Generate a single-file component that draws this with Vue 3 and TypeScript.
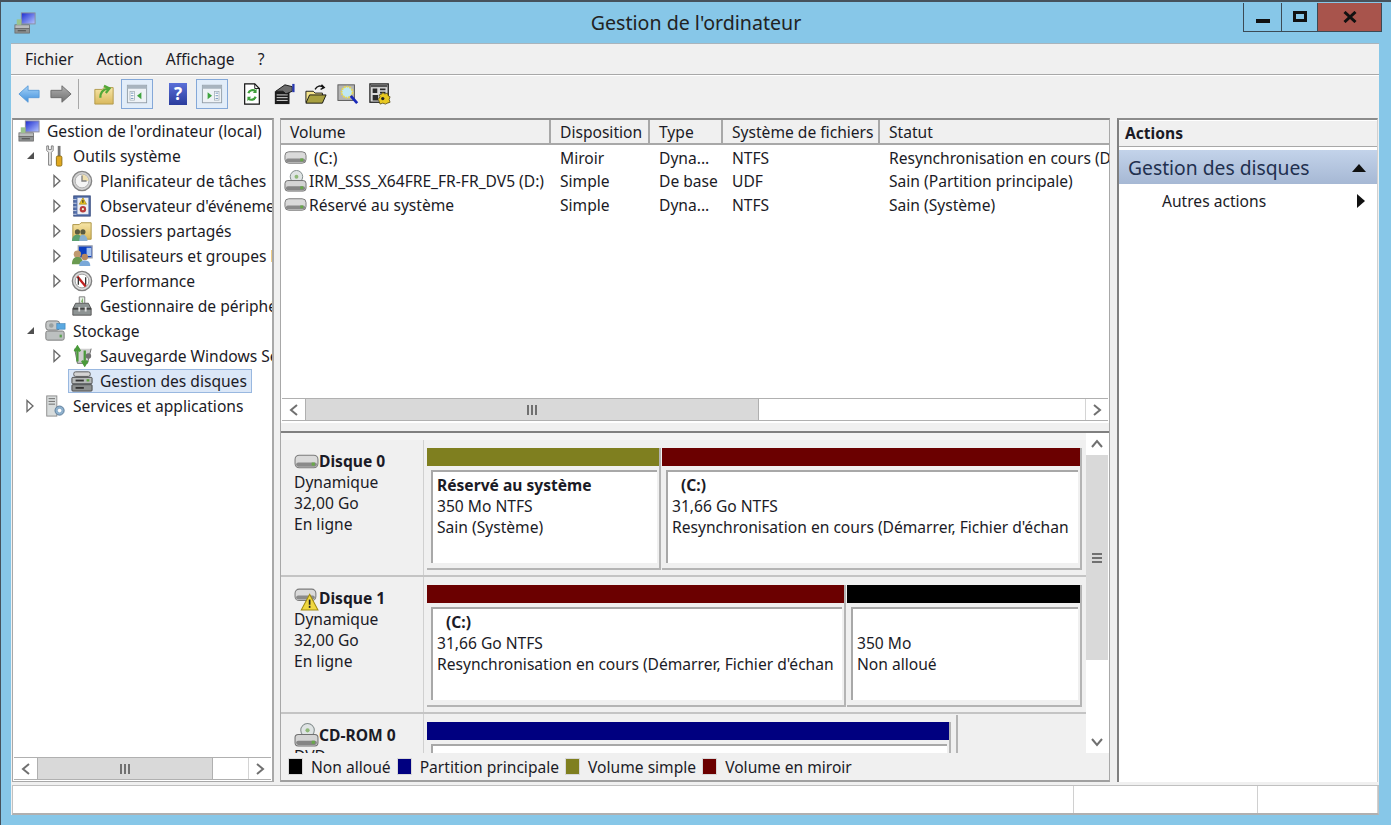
<script setup lang="ts">
interface TreeNode { level: number; exp: '' | 'open' | 'closed'; icon: string; label: string; selected?: boolean }
const menus = ['Fichier', 'Action', 'Affichage', '?']
const tree: TreeNode[] = [
  { level: 0, exp: '', icon: 'comp', label: "Gestion de l'ordinateur (local)" },
  { level: 1, exp: 'open', icon: 'tools', label: 'Outils système' },
  { level: 2, exp: 'closed', icon: 'clock', label: 'Planificateur de tâches' },
  { level: 2, exp: 'closed', icon: 'book', label: "Observateur d'événements" },
  { level: 2, exp: 'closed', icon: 'share', label: 'Dossiers partagés' },
  { level: 2, exp: 'closed', icon: 'users', label: 'Utilisateurs et groupes locaux' },
  { level: 2, exp: 'closed', icon: 'perf', label: 'Performance' },
  { level: 2, exp: '', icon: 'toolbox', label: 'Gestionnaire de périphériques' },
  { level: 1, exp: 'open', icon: 'storage', label: 'Stockage' },
  { level: 2, exp: 'closed', icon: 'backup', label: 'Sauvegarde Windows Server' },
  { level: 2, exp: '', icon: 'diskm', label: 'Gestion des disques', selected: true },
  { level: 1, exp: 'closed', icon: 'server', label: 'Services et applications' },
]
const columns = ['Volume', 'Disposition', 'Type', 'Système de fichiers', 'Statut']
const volumes = [
  { icon: 'drive', name: '(C:)', wide: true, cells: ['Miroir', 'Dyna...', 'NTFS', "Resynchronisation en cours (Démarrer, Fichier d'échange)"] },
  { icon: 'cdrive', name: 'IRM_SSS_X64FRE_FR-FR_DV5 (D:)', wide: false, cells: ['Simple', 'De base', 'UDF', 'Sain (Partition principale)'] },
  { icon: 'drive', name: 'Réservé au système', wide: false, cells: ['Simple', 'Dyna...', 'NTFS', 'Sain (Système)'] },
]
const legend = [
  { color: '#000000', label: 'Non alloué' },
  { color: '#000080', label: 'Partition principale' },
  { color: '#7f7f1f', label: 'Volume simple' },
  { color: '#6b0000', label: 'Volume en miroir' },
]
const disks = [
  {
    icon: 'drive', name: 'Disque 0', lines: ['Dynamique', '32,00 Go', 'En ligne'],
    vols: [
      { w: 234, color: '#7f7f1f', title: 'Réservé au système', indent: false, lines: ['350 Mo NTFS', 'Sain (Système)'] },
      { w: 420, color: '#6b0000', title: '(C:)', indent: true, lines: ['31,66 Go NTFS', "Resynchronisation en cours (Démarrer, Fichier d'échan"] },
    ],
  },
  {
    icon: 'warn', name: 'Disque 1', lines: ['Dynamique', '32,00 Go', 'En ligne'],
    vols: [
      { w: 419, color: '#6b0000', title: '(C:)', indent: true, lines: ['31,66 Go NTFS', "Resynchronisation en cours (Démarrer, Fichier d'échan"] },
      { w: 235, color: '#000000', title: '', indent: false, lines: ['350 Mo', 'Non alloué'] },
    ],
  },
  {
    icon: 'cdrive', name: 'CD-ROM 0', lines: ['DVD'],
    vols: [
      { w: 524, color: '#000080', title: '', indent: false, lines: [] as string[] },
    ],
  },
]
</script>

<template>
  <div class="window">
    <svg class="defs" width="0" height="0" aria-hidden="true">
      <defs>
        <linearGradient id="gBlue" x1="0" y1="0" x2="1" y2="1"><stop offset="0" stop-color="#1a2ad0" /><stop offset="1" stop-color="#b8c8ff" /></linearGradient>
        <linearGradient id="gArrow" x1="0" y1="0" x2="0" y2="1"><stop offset="0" stop-color="#a8d4f8" /><stop offset="1" stop-color="#3f8fdc" /></linearGradient>
        <linearGradient id="gGray" x1="0" y1="0" x2="0" y2="1"><stop offset="0" stop-color="#b0b0b0" /><stop offset="1" stop-color="#707070" /></linearGradient>
        <linearGradient id="gFolder" x1="0" y1="0" x2="0" y2="1"><stop offset="0" stop-color="#f7e6a8" /><stop offset="1" stop-color="#d9b85c" /></linearGradient>
      </defs>
      <symbol id="comp" viewBox="0 0 24 24">
        <rect x="8" y="1" width="15" height="12" fill="url(#gBlue)" stroke="#8a8a9a" />
        <rect x="1" y="14" width="16" height="4" fill="#b9bcbc" stroke="#666" stroke-width=".8" />
        <rect x="1" y="18" width="16" height="5" fill="#8e9292" stroke="#666" stroke-width=".8" />
        <rect x="3" y="8" width="5" height="6" fill="#9ac48c" />
        <rect x="4" y="20" width="9" height="1" fill="#444" />
      </symbol>
      <symbol id="tools" viewBox="0 0 24 24">
        <path d="M3 1v5l2 2v14h3V8l2-2V1L8 1v4H5V1z" fill="#ececec" stroke="#777" stroke-width="1" />
        <rect x="15" y="1" width="3" height="11" fill="#777" />
        <rect x="13.500" y="12" width="6" height="11" rx="1.500" fill="#e0a820" stroke="#8a6a10" />
      </symbol>
      <symbol id="clock" viewBox="0 0 24 24">
        <circle cx="12" cy="12" r="10.500" fill="#d2d2d2" stroke="#858585" stroke-width="1.500" />
        <circle cx="12" cy="12" r="7.500" fill="#f4f4f4" stroke="#aaa" />
        <path d="M12 5a7 7 0 0 1 7 7h-7z" fill="#eedfae" />
        <path d="M12 6v6h5" fill="none" stroke="#808080" stroke-width="1.500" />
      </symbol>
      <symbol id="book" viewBox="0 0 24 24">
        <rect x="3" y="1" width="18" height="22" fill="#5470ac" stroke="#34497c" />
        <rect x="7" y="3" width="12" height="18" fill="#eceef2" />
        <path d="M13 3l4 7H9z" fill="#ecc820" stroke="#907010" stroke-width=".6" />
        <rect x="12.400" y="5.500" width="1.200" height="3" fill="#222" />
        <circle cx="13" cy="15.500" r="3.500" fill="#b83a3a" />
        <circle cx="13" cy="15.500" r="1.200" fill="#eec" />
        <path d="M2 5h4M2 9h4M2 13h4M2 17h4M2 21h4" stroke="#d0d6e6" />
      </symbol>
      <symbol id="share" viewBox="0 0 24 24">
        <path d="M2 5h7l2-2h11v18H2z" fill="url(#gFolder)" stroke="#a89040" />
        <circle cx="7" cy="13" r="2.800" fill="#5a5a40" /><circle cx="13" cy="13" r="2.800" fill="#5a5a40" />
        <path d="M1 23c0-5 3-7 6-7s5 2 5 7z" fill="#5aa070" /><path d="M9 23c0-5 2-7 4-7s5 2 5 7z" fill="#8ab0d0" />
      </symbol>
      <symbol id="users" viewBox="0 0 24 24">
        <rect x="8" y="1" width="15" height="13" fill="#0c3fc0" stroke="#9aa0b0" stroke-width="1.500" />
        <rect x="17" y="3" width="5" height="9" fill="#a8c4f0" />
        <circle cx="7" cy="10" r="4" fill="#c09a70" /><path d="M1 21c0-6 3-8 6-8s6 2 6 8z" fill="#6a9a50" />
        <circle cx="15" cy="13" r="3.500" fill="#b88860" /><path d="M9 23c0-5 3-6 6-6s6 1 6 6z" fill="#7aa8d8" />
      </symbol>
      <symbol id="perf" viewBox="0 0 24 24">
        <circle cx="12" cy="12" r="10.500" fill="#dcdcdc" stroke="#808080" stroke-width="1.500" />
        <circle cx="12" cy="12" r="7.500" fill="#fff" stroke="#999" />
        <path d="M7 7l9 11" fill="none" stroke="#c02020" stroke-width="2.500" />
        <path d="M8 16V8M16 16V8" fill="none" stroke="#303030" stroke-width="1.400" />
      </symbol>
      <symbol id="toolbox" viewBox="0 0 24 24">
        <path d="M9 9V2h6v7" fill="#e8f0e8" stroke="#777" />
        <path d="M11 7l2-4v6z" fill="#7ab060" />
        <path d="M5 9h14l3 6v7H2v-7z" fill="#8e9494" stroke="#555" />
        <rect x="2" y="14" width="20" height="2" fill="#444" />
        <rect x="8" y="13" width="2" height="5" fill="#ddd" /><rect x="15" y="13" width="2" height="5" fill="#ddd" />
      </symbol>
      <symbol id="storage" viewBox="0 0 24 24">
        <rect x="2" y="1" width="15" height="10" rx="3" fill="#c5c8c8" stroke="#777" />
        <rect x="2" y="12" width="20" height="10" rx="2" fill="#bcc0c0" stroke="#777" />
        <rect x="14" y="4" width="9" height="6" fill="#5aa8e0" stroke="#2f78b0" stroke-width=".6" />
        <circle cx="8" cy="6" r="2.500" fill="#9aa0a0" /><rect x="17" y="16" width="2.500" height="3" fill="#5aa050" />
      </symbol>
      <symbol id="backup" viewBox="0 0 24 24">
        <path d="M4 4l3 16h11l4-16" fill="#cfcfcf" stroke="#666" />
        <path d="M7 3v15M4 7l3-5 3 5" fill="none" stroke="#4a9a3a" stroke-width="2.500" />
        <path d="M15 21V6M12 17l3 5 3-5" fill="none" stroke="#4a9a3a" stroke-width="2.500" />
        <circle cx="19" cy="12" r="3" fill="#707070" />
      </symbol>
      <symbol id="diskm" viewBox="0 0 24 24">
        <rect x="3" y="2" width="18" height="5" rx="2" fill="#d4d4d4" stroke="#555" />
        <rect x="1" y="8" width="22" height="7" rx="1" fill="#b5b8b8" stroke="#444" />
        <rect x="1" y="16" width="22" height="7" rx="1" fill="#8d9090" stroke="#444" />
        <rect x="5" y="10.500" width="9" height="2" fill="#333" /><rect x="17" y="10" width="3" height="2.500" fill="#5ca040" />
        <rect x="5" y="18.500" width="9" height="2" fill="#333" />
      </symbol>
      <symbol id="server" viewBox="0 0 24 24">
        <rect x="3" y="1" width="11" height="22" fill="#d8dcdc" stroke="#8a8a8a" />
        <path d="M5 4h7M5 7h7M5 10h7" stroke="#666" />
        <circle cx="17" cy="17" r="5" fill="#8eb0cc" stroke="#5a7a98" />
        <circle cx="17" cy="17" r="2" fill="#fff" />
      </symbol>
      <symbol id="drive" viewBox="0 0 24 24">
        <rect x="1" y="6" width="22" height="12" rx="4" fill="#dadada" stroke="#7a7a7a" />
        <rect x="2" y="13" width="20" height="4" rx="2" fill="#8a8a8a" />
        <rect x="17" y="13" width="3" height="3" fill="#68a848" />
      </symbol>
      <symbol id="cdrive" viewBox="0 0 24 24">
        <circle cx="13" cy="7" r="6.500" fill="#dfe4e4" stroke="#808a8a" />
        <circle cx="13" cy="7" r="2" fill="#8eb878" />
        <rect x="1" y="11" width="22" height="11" rx="3" fill="#d4d4d4" stroke="#707070" />
        <rect x="2" y="17" width="20" height="4" rx="2" fill="#858585" />
        <rect x="17" y="17" width="3" height="3" fill="#68a848" />
      </symbol>
      <symbol id="warn" viewBox="0 0 24 24">
        <rect x="1" y="3" width="20" height="11" rx="4" fill="#dadada" stroke="#7a7a7a" />
        <rect x="2" y="9" width="18" height="4" rx="2" fill="#8a8a8a" />
        <path d="M15 8l8 15H7z" fill="#f0d840" stroke="#a08a10" />
        <rect x="14.200" y="13" width="1.600" height="5" fill="#222" /><rect x="14.200" y="19" width="1.600" height="2" fill="#222" />
      </symbol>
      <symbol id="back" viewBox="0 0 24 24">
        <path d="M1 12L11 3v5h12v8H11v5z" fill="url(#gArrow)" stroke="#5a9ad8" />
      </symbol>
      <symbol id="fwd" viewBox="0 0 24 24">
        <path d="M23 12L13 3v5H1v8h12v5z" fill="url(#gGray)" stroke="#6a6a6a" />
      </symbol>
      <symbol id="up" viewBox="0 0 24 24">
        <path d="M2 7h8l2-2h10v18H2z" fill="url(#gFolder)" stroke="#b09848" />
        <path d="M8 16c0-6 3-9 8-10M12 3l6 3-4 5" fill="none" stroke="#52a838" stroke-width="2.500" />
      </symbol>
      <symbol id="paneL" viewBox="0 0 32 32">
        <rect x="5" y="6" width="22" height="20" fill="#eef2f6" stroke="#8f9aa4" />
        <rect x="5" y="6" width="22" height="4" fill="#a8b4bf" />
        <rect x="8" y="13" width="5" height="10" fill="#fff" stroke="#9aa6b0" stroke-width=".8" />
        <path d="M9 15h3M9 18h3M9 21h3" stroke="#5a80b0" />
        <path d="M21 14v8l-5-4z" fill="#3fa43f" />
      </symbol>
      <symbol id="paneR" viewBox="0 0 32 32">
        <rect x="5" y="6" width="22" height="20" fill="#eef2f6" stroke="#8f9aa4" />
        <rect x="5" y="6" width="22" height="4" fill="#a8b4bf" />
        <rect x="19" y="13" width="5" height="10" fill="#fff" stroke="#9aa6b0" stroke-width=".8" />
        <path d="M20 15h3M20 18h3M20 21h3" stroke="#5a80b0" />
        <path d="M11 14v8l5-4z" fill="#3fa43f" />
      </symbol>
      <symbol id="refresh" viewBox="0 0 24 24">
        <path d="M4 1h11l5 5v17H4z" fill="#fff" stroke="#111" stroke-width="1.300" />
        <path d="M15 1v5h5" fill="none" stroke="#111" />
        <path d="M8 11a5 5 0 0 1 8-2M16 15a5 5 0 0 1-8 2" fill="none" stroke="#3f9f3a" stroke-width="2.400" />
        <path d="M17 6v5h-4zM7 20v-5h4z" fill="#3f9f3a" />
      </symbol>
      <symbol id="props" viewBox="0 0 24 24">
        <rect x="2" y="9" width="16" height="14" fill="#1c1c1c" />
        <path d="M4 13h12M4 16h12M4 19h12" stroke="#e8e8e8" />
        <path d="M3 9l10-7 8 2v5l-7 3-3-3z" fill="#6c6c6c" stroke="#111" />
        <rect x="21" y="1" width="2.500" height="9" fill="#2838b0" />
      </symbol>
      <symbol id="open" viewBox="0 0 24 24">
        <path d="M1 9h8l2 2h8v10H1z" fill="#f4e48c" stroke="#111" />
        <path d="M1 22l4-9h18l-4 9z" fill="#a8a040" stroke="#111" />
        <path d="M11 7c2-4 6-5 9-2M18 2l3 3-4 2" fill="none" stroke="#111" stroke-width="1.500" />
      </symbol>
      <symbol id="find" viewBox="0 0 24 24">
        <rect x="1" y="2" width="18" height="17" fill="#b4b4b4" stroke="#555" />
        <circle cx="11" cy="10" r="6" fill="#bfe8f4" stroke="#e8d850" stroke-width="2" stroke-dasharray="2 1" />
        <path d="M15 14l7 8" stroke="#1828b8" stroke-width="3" />
      </symbol>
      <symbol id="mmc" viewBox="0 0 24 24">
        <rect x="1" y="1" width="20" height="20" fill="#d8d8d8" stroke="#222" stroke-width="1.400" />
        <rect x="2" y="2" width="18" height="2.500" fill="#555" />
        <path d="M4 6h5v5H4zM12 6h6v2h-6zM12 9.500h6v2h-6zM4 13h6v6H4z" fill="#2a2a2a" />
        <path d="M15 10l2 2 3-1 1 3 2 1-1 3 1 3-3 1-2 1-3-1-3 1-1-3-1-2 2-3-1-2 3-1z" fill="#e8c820" stroke="#4a4010" stroke-width=".8" />
        <circle cx="15" cy="17" r="1.800" fill="#222" />
      </symbol>
    </svg>

    <header class="titlebar">
      <svg class="app-icon"><use href="#comp" /></svg>
      <div class="title">Gestion de l'ordinateur</div>
      <div class="winbtns">
        <div class="wb wb-min"><span class="min-glyph"></span></div>
        <div class="wb wb-max"><span class="max-glyph"></span></div>
        <div class="wb wb-close">
          <svg width="14" height="12" viewBox="0 0 14 12"><path d="M1.500 1l11 10M12.500 1l-11 10" stroke="#111" stroke-width="3" /></svg>
        </div>
      </div>
    </header>

    <div class="client">
      <nav class="menu"><span v-for="m in menus" :key="m" class="menu-item">{{ m }}</span></nav>

      <div class="toolbar">
        <svg class="tb tb-back"><use href="#back" /></svg>
        <svg class="tb tb-fwd"><use href="#fwd" /></svg>
        <span class="tb-sep"></span>
        <svg class="tb tb-up"><use href="#up" /></svg>
        <span class="tb-btn"><svg class="tb-pane"><use href="#paneL" /></svg></span>
        <span class="tb-help">?</span>
        <span class="tb-btn"><svg class="tb-pane"><use href="#paneR" /></svg></span>
        <svg class="tb tb-act"><use href="#refresh" /></svg>
        <svg class="tb tb-act"><use href="#props" /></svg>
        <svg class="tb tb-act"><use href="#open" /></svg>
        <svg class="tb tb-act"><use href="#find" /></svg>
        <svg class="tb tb-act"><use href="#mmc" /></svg>
      </div>

      <div class="panes">
        <aside class="tree-pane">
          <div class="tree">
            <div v-for="n in tree" :key="n.label" class="row" :class="'lvl' + n.level">
              <span v-if="n.level > 0" class="exp">
                <svg v-if="n.exp === 'open'" width="11" height="11" viewBox="0 0 11 11"><path d="M9 2v7H2z" fill="#505050" /></svg>
                <svg v-else-if="n.exp === 'closed'" width="10" height="14" viewBox="0 0 10 14"><path d="M2 1.500l6 5.500-6 5.500z" fill="#fff" stroke="#666" stroke-width="1.300" /></svg>
              </span>
              <span class="node" :class="{ sel: n.selected }">
                <svg class="nic"><use :href="'#' + n.icon" /></svg>
                <span class="nlabel">{{ n.label }}</span>
              </span>
            </div>
          </div>
          <div class="hscroll tree-scroll">
            <span class="sb-btn"><svg width="10" height="12" viewBox="0 0 10 12"><path d="M8 1L2 6l6 5" fill="none" stroke="#707070" stroke-width="2" /></svg></span>
            <span class="sb-thumb tree-thumb"><i class="grip-v"></i></span>
            <span class="sb-track"></span>
            <span class="sb-btn"><svg width="10" height="12" viewBox="0 0 10 12"><path d="M2 1l6 5-6 5" fill="none" stroke="#707070" stroke-width="2" /></svg></span>
          </div>
        </aside>

        <main class="mid">
          <section class="list">
            <div class="list-head">
              <span v-for="c in columns" :key="c" class="th">{{ c }}</span>
            </div>
            <div class="list-body">
              <div v-for="v in volumes" :key="v.name" class="tr">
                <span class="td td-name">
                  <svg class="vic"><use :href="'#' + v.icon" /></svg>
                  <span :class="{ wide: v.wide }">{{ v.name }}</span>
                </span>
                <span v-for="c in v.cells" :key="c" class="td">{{ c }}</span>
              </div>
            </div>
            <div class="hscroll list-scroll">
              <span class="sb-btn"><svg width="10" height="12" viewBox="0 0 10 12"><path d="M8 1L2 6l6 5" fill="none" stroke="#707070" stroke-width="2" /></svg></span>
              <span class="sb-thumb list-thumb"><i class="grip-v"></i></span>
              <span class="sb-track"></span>
              <span class="sb-btn"><svg width="10" height="12" viewBox="0 0 10 12"><path d="M2 1l6 5-6 5" fill="none" stroke="#707070" stroke-width="2" /></svg></span>
            </div>
          </section>

          <div class="splitter"></div>

          <section class="disks">
            <div class="disk-list">
              <div v-for="d in disks" :key="d.name" class="disk">
                <div class="disk-label">
                  <div class="disk-name"><svg class="dic"><use :href="'#' + d.icon" /></svg><b>{{ d.name }}</b></div>
                  <div v-for="l in d.lines" :key="l">{{ l }}</div>
                </div>
                <div class="disk-vols">
                  <div v-for="(v, i) in d.vols" :key="i" class="vol" :style="{ width: v.w + 'px' }">
                    <div class="vol-bar" :style="{ background: v.color }"></div>
                    <div class="vol-box">
                      <div class="vol-title" :class="{ indent: v.indent }">{{ v.title || '\u00a0' }}</div>
                      <div v-for="l in v.lines" :key="l">{{ l }}</div>
                    </div>
                  </div>
                  <span v-if="d.vols.length === 1" class="vol-sep"></span>
                </div>
              </div>
            </div>
            <div class="vscroll">
              <span class="sb-btn"><svg width="12" height="10" viewBox="0 0 12 10"><path d="M1 8l5-6 5 6" fill="none" stroke="#707070" stroke-width="2" /></svg></span>
              <span class="vthumb"><i class="grip-h"></i></span>
              <span class="sb-track"></span>
              <span class="sb-btn"><svg width="12" height="10" viewBox="0 0 12 10"><path d="M1 2l5 6 5-6" fill="none" stroke="#707070" stroke-width="2" /></svg></span>
            </div>
          </section>

          <footer class="legend">
            <span v-for="l in legend" :key="l.label" class="leg">
              <i class="swatch" :style="{ background: l.color }"></i>{{ l.label }}
            </span>
          </footer>
        </main>

        <aside class="actions">
          <div class="act-head">Actions</div>
          <div class="act-band">
            <span>Gestion des disques</span>
            <svg width="14" height="8" viewBox="0 0 14 8"><path d="M7 0l7 8H0z" fill="#111" /></svg>
          </div>
          <div class="act-item">
            <span>Autres actions</span>
            <svg width="8" height="14" viewBox="0 0 8 14"><path d="M0 0l8 7-8 7z" fill="#111" /></svg>
          </div>
        </aside>
      </div>

      <footer class="status">
        <span class="st st-main"></span>
        <span class="st st-b"></span>
        <span class="st st-c"></span>
      </footer>
    </div>
  </div>
</template>

<style>
html, body { margin: 0; background: #87c7e8; }
</style>

<style scoped>
.window {
  width: 1391px; height: 825px; box-sizing: border-box; overflow: hidden;
  display: flex; flex-direction: column;
  background: #87c7e8;
  border-top: 2px solid #46525c; border-left: 1px solid #46525c;
  font-family: "Noto Sans", "Open Sans", sans-serif; font-size: 15.6px; color: #1b1b26;
}
.defs { position: absolute; }
svg use { filter: blur(.3px); }
.titlebar {
  height: 41px; flex: none; display: grid; grid-template-columns: 1fr auto 1fr; align-items: center;
  position: relative;
}
.app-icon { width: 22px; height: 22px; margin-left: 13px; }
.title { font-size: 19.6px; color: #222; padding-bottom: 1px; }
.winbtns {
  justify-self: end; align-self: start; display: flex; height: 29px; margin: 1px 9px 0 0; box-sizing: border-box;
  border: 1px solid #3b4a55; border-top: none;
}
.wb { display: flex; align-items: center; justify-content: center; box-sizing: border-box; }
.wb-min { width: 38px; border-right: 1px solid #3b4a55; }
.wb-max { width: 36px; border-right: 1px solid #3b4a55; }
.wb-close { width: 63px; background: #a8544c; }
.min-glyph { width: 14px; height: 4px; background: #111; margin-top: 8px; }
.max-glyph { width: 14px; height: 11px; box-sizing: border-box; border: 3px solid #111; margin-top: -1px; }

.client {
  flex: 1; min-height: 0; margin: 0 12px 10px 10px; display: flex; flex-direction: column;
  background: #f0f0f0; border-top: 1px solid #a9b4bc;
}
.menu {
  height: 31px; flex: none; box-sizing: border-box; display: flex; align-items: center; gap: 23px;
  padding-left: 14px; border-bottom: 1px solid #a8a8a8;
}
.toolbar {
  height: 43px; flex: none; box-sizing: border-box; display: flex; align-items: center; padding: 0 0 7px 7px;
  border-top: 1px solid #fff;
}
.tb { width: 22px; height: 22px; flex: none; }
.tb-fwd { margin-left: 10px; }
.tb-sep { width: 1px; height: 30px; background: #a8a8a8; margin: 0 14px 0 6px; }
.tb-up { margin-right: 6px; }
.tb-btn {
  width: 32px; height: 30px; flex: none; box-sizing: border-box; border: 1px solid #84a8d8; background: #e2edf9;
  display: flex; align-items: center; justify-content: center;
}
.tb-pane { width: 30px; height: 28px; }
.tb-help {
  width: 18px; height: 22px; margin: 0 9px 0 16px; flex: none; background: linear-gradient(#5a6fd8, #2a3c9c);
  color: #fff; font-weight: 700; font-size: 17px; line-height: 22px; text-align: center;
}
.tb-act { margin-right: 10px; }
.tb-btn + .tb-act { margin-left: 13px; }

.panes { height: 664px; flex: none; display: flex; gap: 6px; padding-left: 1px; box-sizing: border-box; }
.tree-pane {
  width: 262px; flex: none; background: #fff; box-sizing: border-box; display: flex; flex-direction: column;
  border: 1px solid #a8a8a8; border-top: 2px solid #8c8c8c; border-right-width: 2px;
}
.tree { flex: 1; min-height: 0; overflow: hidden; margin-top: -2px; }
.row { height: 25px; display: flex; align-items: center; white-space: nowrap; }
.lvl0 { padding-left: 2px; }
.lvl1 { padding-left: 10px; }
.lvl2 { padding-left: 37px; }
.exp { width: 14px; height: 25px; flex: none; display: flex; align-items: center; justify-content: center; margin-right: 4px; }
.node {
  height: 24px; box-sizing: border-box; display: inline-flex; align-items: center; gap: 7px; padding: 0 4px 0 2px;
  border: 1px solid transparent;
}
.node.sel { background: #dbe7f7; border-color: #99b8e0; }
.nic { width: 22px; height: 22px; flex: none; }

.hscroll { display: flex; flex: none; height: 23px; box-sizing: border-box; border-top: 1px solid #b0b0b0; border-bottom: 1px solid #b0b0b0; background: #fff; }
.sb-btn { width: 23px; flex: none; display: flex; align-items: center; justify-content: center; background: #fff; box-sizing: border-box; }
.sb-thumb { display: flex; align-items: center; justify-content: center; background: #d9d9d9; border-left: 1px solid #b0b0b0; border-right: 1px solid #b0b0b0; box-sizing: border-box; flex: none; }
.sb-track { flex: 1; }
.hscroll .sb-btn:last-child { border-left: 1px solid #d4d4d4; }
.tree-thumb { width: 176px; }
.list-thumb { width: 454px; }
.tree-scroll { margin: 0 1px 1px 1px; }
.grip-v { width: 11px; height: 10px; background: repeating-linear-gradient(90deg, #707070 0 2px, transparent 2px 4px); }

.mid {
  width: 830px; flex: none; box-sizing: border-box; display: flex; flex-direction: column; background: #fff;
  border: 1px solid #a8a8a8; border-top: 2px solid #8c8c8c; border-bottom: 2px solid #a0a0a0;
}
.list { height: 301px; flex: none; display: flex; flex-direction: column; overflow: hidden; }
.list-head, .tr { display: grid; grid-template-columns: 270px 99px 73px 157px 1fr; }
.list-head { height: 25px; flex: none; background: #f0f0f0; border-bottom: 2px solid #a8a8a8; box-sizing: border-box; }
.th { padding-left: 9px; line-height: 24px; border-right: 2px solid #a8a8a8; box-sizing: border-box; white-space: nowrap; }
.th:last-child { border-right: none; }
.list-body { flex: 1; min-height: 0; padding-top: 1px; }
.tr { height: 23.5px; align-items: center; white-space: nowrap; }
.td { padding-left: 9px; min-width: 0; overflow: hidden; }
.td-name { padding-left: 3px; display: flex; align-items: center; gap: 2px; overflow: visible; }
.vic { width: 23px; height: 23px; flex: none; }
.wide { margin-left: 5px; }
.list-scroll { margin: 0 1px 0 1px; height: 23px; }

.splitter { height: 12px; flex: none; box-sizing: border-box; background: #f0f0f0; border-top: 2px solid #fff; border-bottom: 2px solid #808080; }

.disks { flex: 1; min-height: 0; display: flex; background: #f0f0f0; }
.disk-list { width: 805px; flex: none; overflow: hidden; padding-top: 7px; box-sizing: border-box; background: #f4f4f4; }
.disk { height: 137px; display: flex; box-sizing: border-box; border-bottom: 2px solid #c4c4c4; }
.disk:last-child { border-bottom: none; }
.disk-label { width: 143px; flex: none; box-sizing: border-box; padding: 11px 0 0 13px; line-height: 21px; background: #f0f0f0; border-right: 1px solid #d0d0d0; }
.disk-name { height: 21px; display: flex; align-items: center; }
.disk-name b { font-weight: 700; }
.dic { width: 25px; height: 25px; flex: none; }
.disk-vols { flex: 1; display: flex; gap: 1px; padding: 8px 0 0 3px; background: #f0f0f0; }
.vol { flex: none; box-sizing: border-box; height: 122px; border-right: 2px solid #b4b4b4; border-bottom: 2px solid #b4b4b4; }
.vol-bar { height: 18px; }
.vol-box {
  margin: 4px 2px 0 4px; height: 93px; box-sizing: border-box; padding: 3px 6px 0 4px; background: #fff; overflow: hidden; white-space: nowrap;
  border-top: 2px solid #a8a8a8; border-left: 2px solid #a8a8a8; line-height: 21px;
}
.vol-title { font-weight: 700; }
.indent { padding-left: 9px; }
.vol-sep { width: 2px; flex: none; margin: -7px 0 0 4px; background: #b4b4b4; }

.vscroll { width: 23px; flex: none; display: flex; flex-direction: column; background: #fff; }
.vscroll .sb-btn { width: 22px; height: 22px; flex: none; }
.vthumb { height: 205px; flex: none; width: 22px; background: #d9d9d9; display: flex; align-items: center; justify-content: center; }
.grip-h { width: 10px; height: 11px; background: repeating-linear-gradient(0deg, #707070 0 2px, transparent 2px 4px); }

.legend { height: 27px; flex: none; display: flex; align-items: center; gap: 6px; padding-left: 7px; background: #f0f0f0; box-sizing: border-box; white-space: nowrap; }
.leg { display: flex; align-items: center; }
.swatch { width: 15px; height: 17px; margin-right: 8px; flex: none; border: 1px solid #d8d8d8; box-sizing: border-box; }

.actions {
  flex: 1; min-width: 0; margin-left: 1px; box-sizing: border-box; background: #fff; margin-right: 1px;
  border-left: 2px solid #808080; border-top: 2px solid #8c8c8c; border-right: 1px solid #d0d0d0;
}
.act-head { height: 27px; box-sizing: border-box; background: #f0f0f0; border-bottom: 1px solid #a8a8a8; font-weight: 700; padding-left: 6px; line-height: 25px; border-top: 1px solid #fff; }
.act-band {
  height: 34px; margin-top: 3px; display: flex; align-items: center; justify-content: space-between; padding: 1px 11px 0 9px; box-sizing: border-box;
  background: linear-gradient(#c3d3ea, #a6b8d4); font-size: 19.3px; color: #22304f;
}
.act-item { height: 34px; display: flex; align-items: center; justify-content: space-between; padding: 0 12px 0 43px; }

.status {
  height: 30px; flex: none; margin: 3px 0 0 1px; box-sizing: border-box; display: flex; background: #fff;
  border: 1px solid #c0c0c0; border-bottom: 2px solid #b0b0b0;
}
.st { box-sizing: border-box; border-right: 1px solid #d0d0d0; }
.st-main { width: 1061px; }
.st-b { width: 184px; }
.st-c { flex: 1; }
</style>
